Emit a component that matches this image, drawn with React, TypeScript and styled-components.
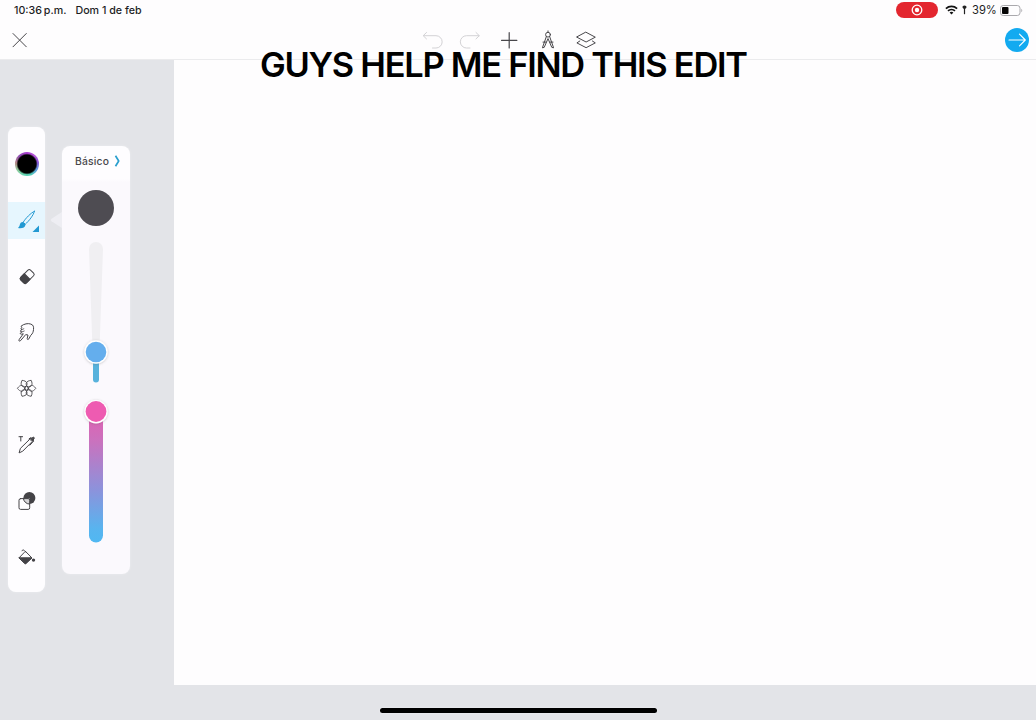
import React from 'react';
import styled, { createGlobalStyle } from 'styled-components';

const GlobalStyle = createGlobalStyle`
  * { box-sizing: border-box; }
  body { margin: 0; background: #e3e4e8; overflow: hidden; }
`;

const Screen = styled.div`
  position: relative;
  display: flex;
  flex-direction: column;
  width: 1036px;
  height: 720px;
  background: #e3e4e8;
  font-family: Inter, 'Liberation Sans', sans-serif;
  color: #1d1d1f;
`;

const Header = styled.header`
  flex: none;
  height: 60px;
  background: #fefdfe;
  border-bottom: 1px solid #ebebed;
`;

const StatusBar = styled.div`
  display: flex;
  align-items: center;
  justify-content: space-between;
  height: 20px;
  padding: 0 13px 0 14px;
  font-size: 10.7px;
  font-weight: 500;
  white-space: pre;
`;

const Clock = styled.div`
  display: flex;
  gap: 9px;
`;

const Time = styled.span`
  word-spacing: -1px;
`;

const StatusIcons = styled.div`
  display: flex;
  align-items: center;
  height: 20px;
`;

const RecordPill = styled.div`
  display: flex;
  align-items: center;
  justify-content: center;
  width: 42px;
  height: 16px;
  margin-right: 7px;
  border-radius: 8px;
  background: #e3262f;
`;

const LocationIcon = styled.svg`
  width: 8px;
  height: 10px;
  margin-left: 2px;
`;

const BatteryText = styled.span`
  width: 24px;
  margin: 0 4px;
  font-size: 11.2px;
  font-weight: 400;
`;

const NavBar = styled.nav`
  display: grid;
  grid-template-columns: 1fr auto 1fr;
  align-items: center;
  height: 40px;
  padding: 0 7px 0 10px;
`;

const NavActions = styled.div`
  display: flex;
  gap: 14.6px;
  margin-right: 21px;
`;

const IconButton = styled.button<{ $faded?: boolean }>`
  display: flex;
  width: 24px;
  height: 24px;
  padding: 0;
  border: 0;
  background: none;
  color: ${(p) => (p.$faded ? '#d3d2d5' : '#48474b')};
`;

const CloseButton = styled(IconButton)`
  width: 20px;
  height: 20px;
`;

const NextButton = styled(IconButton)`
  justify-self: end;
  border-radius: 50%;
  background: #13aaf0;
  color: #fff;
`;

const Workspace = styled.main`
  display: flex;
  height: 625px;
`;

const Side = styled.aside`
  display: flex;
  align-items: flex-start;
  width: 174px;
  padding-left: 8px;
`;

const Canvas = styled.section`
  flex: 1;
  background: #fefdfe;
`;

const ToolRail = styled.div`
  display: flex;
  flex-direction: column;
  width: 37px;
  height: 465px;
  margin-top: 67px;
  padding-top: 9px;
  border-radius: 8px;
  background: #fefdff;
  box-shadow: 0 0 2px #eff0f3;
`;

const Tool = styled.button<{ $active?: boolean }>`
  display: flex;
  width: 37px;
  height: 56px;
  padding: 0;
  border: 0;
  color: ${(p) => (p.$active ? '#2199d2' : '#444347')};
  background: ${(p) =>
    p.$active ? 'linear-gradient(#e6f6fe, #e6f6fe) 0 10px / 100% 37px no-repeat' : 'none'};
`;

const ColorRing = styled.span`
  width: 24px;
  height: 24px;
  margin: 15.5px 0 0 6.5px;
  border-radius: 50%;
  background:
    radial-gradient(circle, #000 0 9px, rgba(0, 0, 0, 0) 10.6px),
    conic-gradient(#a83ccf, #b655d8 40deg, #8a55d8 80deg, #5f9ae0 120deg, #50cdb5 160deg, #66d5b0 200deg, #90c99a 240deg, #b58a88 275deg, #8e4cb0 315deg, #a83ccf);
`;

const Pointer = styled.svg`
  width: 13px;
  height: 20px;
  margin: 150px 0 0 4px;
`;

const BrushPanel = styled.div`
  display: flex;
  flex-direction: column;
  align-items: center;
  width: 68px;
  height: 428px;
  margin-top: 86px;
  border-radius: 8px;
  background: linear-gradient(#fefdff 0 33px, #fbf9fd 36px);
  box-shadow: 0 0 2px #eff0f3;
`;

const BrushName = styled.div`
  display: flex;
  align-items: center;
  align-self: stretch;
  gap: 5px;
  height: 29px;
  padding-left: 13px;
  font-size: 10.3px;
  font-weight: 500;
  letter-spacing: 0.2px;
  color: #48474b;
`;

const BrushPreview = styled.div`
  width: 36px;
  height: 36px;
  margin-top: 15px;
  border-radius: 50%;
  background: #4e4c52;
`;

const Sliders = styled.svg`
  width: 68px;
  height: 320px;
  margin-top: 10px;
`;

const Caption = styled.h1`
  position: absolute;
  top: 44px;
  left: 260px;
  margin: 0;
  font-size: 34.4px;
  line-height: 42px;
  font-weight: 600;
  letter-spacing: -1.26px;
  white-space: nowrap;
  color: #000;
`;

const Footer = styled.footer`
  display: flex;
  flex: 1;
  justify-content: center;
  padding-top: 23px;
`;

const HomeIndicator = styled.div`
  width: 277px;
  height: 5px;
  border-radius: 3px;
  background: #000;
  box-shadow: 0 0 2px #f4f4f6;
`;

const Glyph = ({ w = 24, h = 24, sw = 1, children }: { w?: number; h?: number; sw?: number; children: React.ReactNode }) => (
  <svg width={w} height={h} viewBox={`0 0 ${w} ${h}`} fill="none" stroke="currentColor" strokeWidth={sw} strokeLinecap="round" strokeLinejoin="round">
    {children}
  </svg>
);

const ToolGlyph = ({ children }: { children: React.ReactNode }) => (
  <Glyph w={37} h={56}>{children}</Glyph>
);

const petals = [0, 60, 120, 180, 240, 300];

export default function App() {
  return (
    <Screen>
      <GlobalStyle />
      <Header>
        <StatusBar>
          <Clock><Time>10:36 p.m.</Time><span>Dom 1 de feb</span></Clock>
          <StatusIcons>
            <RecordPill>
              <svg width="12" height="12" viewBox="0 0 12 12">
                <circle cx="6" cy="6" r="4.8" fill="none" stroke="#fff" strokeWidth="1.3" />
                <circle cx="6" cy="6" r="2.2" fill="#fff" />
              </svg>
            </RecordPill>
            <svg width="13" height="10" viewBox="0 0 13 10" fill="none" stroke="#111" strokeWidth="1.7">
              <path d="M.9 3.6C4.1.6 8.9.6 12.1 3.6M3 5.9c2-1.8 5-1.8 7 0" />
              <path d="M4.6 7.5c1.2-.9 2.6-.9 3.8 0L6.5 9.5z" fill="#111" stroke="none" />
            </svg>
            <LocationIcon viewBox="0 0 8 10">
              <path d="M4.5 1v8.2" stroke="#222" strokeWidth="1.2" />
              <path d="M4.5.4c1.3 0 2 .8 2 1.7 0 1-.8 1.8-2 1.8s-2-.8-2-1.8c0-.9.7-1.7 2-1.7z" fill="#222" />
            </LocationIcon>
            <BatteryText>39%</BatteryText>
            <svg width="23" height="11" viewBox="0 0 23 11">
              <rect x=".5" y=".5" width="19.5" height="10" rx="2.7" fill="none" stroke="#aaa9ad" />
              <rect x="2" y="2" width="6.5" height="7" rx="1" fill="#050505" />
              <path d="M21.3 3.8v3.4c1.3-.5 1.3-2.9 0-3.4z" fill="#aaa9ad" />
            </svg>
          </StatusIcons>
        </StatusBar>
        <NavBar>
          <CloseButton aria-label="Cerrar">
            <Glyph w={20} h={20}><path d="M3 3.5 16.3 16.8M16.3 3.5 3 16.8" /></Glyph>
          </CloseButton>
          <NavActions>
            <IconButton $faded aria-label="Deshacer">
              <Glyph><path d="M6.5 4.5 3.2 7.7l3.3 3.2M3.5 7.7H16a6.1 6.1 0 0 1 0 12.3h-3.5" /></Glyph>
            </IconButton>
            <IconButton $faded aria-label="Rehacer">
              <Glyph><path d="m18 4.5 3.3 3.2-3.3 3.2M21 7.7H8.5a6.1 6.1 0 0 0 0 12.3H12" /></Glyph>
            </IconButton>
            <IconButton aria-label="Agregar">
              <Glyph sw={1.2}><path d="M12.2 4.7v15.2M4.5 12.3h15.4" /></Glyph>
            </IconButton>
            <IconButton aria-label="Reglas">
              <Glyph>
                <path d="M12 2.9v1.3M10.4 8.5 6.4 19.8l1.8-.4L12 10.6l3.8 8.8 1.8.4-4-11.3M7 14.1h3M14 14.1h3" />
                <circle cx="12" cy="6.7" r="2.4" />
              </Glyph>
            </IconButton>
            <IconButton aria-label="Capas">
              <Glyph>
                <path d="m12.1 4.3 9.2 4.9-9.2 4.8-9.2-4.8zM5.8 13l-2.9 1.9 9.2 4.8 9.2-4.8-2.9-1.9" />
              </Glyph>
            </IconButton>
          </NavActions>
          <NextButton aria-label="Siguiente">
            <Glyph sw={1.1}><path d="M4 12h16.2M14.5 6.2l5.8 5.8-5.8 5.8" /></Glyph>
          </NextButton>
        </NavBar>
      </Header>

      <Workspace>
        <Side>
          <ToolRail>
            <Tool aria-label="Color"><ColorRing /></Tool>
            <Tool $active aria-label="Pincel">
              <ToolGlyph>
                <path d="M26.4 19.3c-3.5 1.5-9 7.2-11.2 11l2.1 1.9c3.5-3 8.4-9.2 9.1-12.9z" />
                <path d="M14.8 30c-3.9.2-2 3.8-4.8 6 3.5.8 7.3-.3 7.5-3.6z" fill="currentColor" stroke="none" />
                <path d="M31 33.5V40h-6.5z" fill="currentColor" stroke="none" />
              </ToolGlyph>
            </Tool>
            <Tool aria-label="Borrador">
              <ToolGlyph>
                <g transform="rotate(-45 19.1 28.6)">
                  <rect x="12.3" y="24.6" width="13.8" height="8" rx="1.8" />
                  <path d="M19.2 24.6v8h-5.1a1.8 1.8 0 0 1-1.8-1.8v-4.4a1.8 1.8 0 0 1 1.8-1.8z" fill="currentColor" />
                </g>
              </ToolGlyph>
            </Tool>
            <Tool aria-label="Difuminar">
              <ToolGlyph>
                <path d="M13.3 22c2.5-2.2 6.9-3 9.5-1.9 2.7.7 3 3 2.7 5.4-.2 2.3-.7 4-2.7 5.8l-2.2 3.9c-.6.8-1.6.3-1.4-.6l.8-3.6-2.3-.4-5 5.9c-1.4 1.3-2.5.2-1.4-1.2l4-5.5-1.9.4c-1.3.1-1.5-1.2-.4-1.7l.9-.6c-1.6.1-2.1-1.1-.8-1.8l.9-.6c-1.4 0-1.5-1.3-.4-1.8z" />
                <path d="m13.8 25.6 2-.8M14 27.9l2.2-.9" strokeWidth=".8" />
              </ToolGlyph>
            </Tool>
            <Tool aria-label="Efectos">
              <ToolGlyph>
                {petals.map((a) => (
                  <path key={a} transform={`rotate(${a} 18.6 28.3)`} strokeWidth=".8" d="M20.5 28.3c1-4 4.4-4 7.3 0-2.9 4-6.3 4-7.3 0z" />
                ))}
                <circle cx="18.6" cy="28.3" r="1.8" strokeWidth=".8" />
              </ToolGlyph>
            </Tool>
            <Tool aria-label="Texto">
              <ToolGlyph>
                <path d="M11 20.7h3.6M12.8 20.7v4.3" />
                <path d="m11.2 36.5 1.2-4.1 9.4-9.2 2.4 2.4-9.2 9.3z" />
                <path d="m21 22.9 1.3-1 1.4.6 1.1-1c.9-.8 1.9.2 1.2 1.1l-1.1 1.2.6 1.4-3.6 4" />
                <path d="m22.2 22.5 2.8 2.8.9-3.2z" fill="currentColor" />
              </ToolGlyph>
            </Tool>
            <Tool aria-label="Formas">
              <ToolGlyph>
                <circle cx="21.4" cy="26.1" r="6" fill="currentColor" stroke="none" />
                <path d="M15.4 26.6h6.3v5.5a6 6 0 0 1-6.3-5.5z" fill="#d6d5d8" stroke="none" />
                <rect x="11" y="26.6" width="10.7" height="10.8" rx="1.6" />
                <path d="M15.4 26.3a6 6 0 0 0 6.2 5.8" />
              </ToolGlyph>
            </Tool>
            <Tool aria-label="Relleno">
              <ToolGlyph>
                <path d="m17.3 23.2 6.6 6.7-6.4 5.7-6.5-5.7 5.3-5.5M14 22.8c.2-1 1.5-1.2 2.3-.3l1.6 1.8" />
                <path d="M11.2 29.8H24l-6.2 5.9h-.6z" fill="currentColor" />
                <circle cx="25.5" cy="32.1" r="1.7" fill="currentColor" stroke="none" />
              </ToolGlyph>
            </Tool>
          </ToolRail>
          <Pointer viewBox="0 0 13 20"><path d="M13 2v16L2.5 11.2a1.5 1.5 0 0 1 0-2.4z" fill="#eeeef3" /></Pointer>
          <BrushPanel>
            <BrushName>
              Básico
              <svg width="7" height="12" viewBox="0 0 7 12" fill="none" stroke="#2a9fce" strokeWidth="1.7"><path d="M1.5.7 4.7 6 1.5 11.3" strokeLinejoin="round" /></svg>
            </BrushName>
            <BrushPreview />
            <Sliders viewBox="0 0 68 320">
              <defs>
                <linearGradient id="opacity" x1="0" y1="0" x2="0" y2="1">
                  <stop offset="0" stopColor="#e65caf" />
                  <stop offset=".25" stopColor="#cb71bd" />
                  <stop offset=".62" stopColor="#8b93dc" />
                  <stop offset=".9" stopColor="#58b4ef" />
                  <stop offset="1" stopColor="#50b8f2" />
                </linearGradient>
                <filter id="shadow" x="-50%" y="-50%" width="200%" height="200%">
                  <feDropShadow dx="0" dy=".5" stdDeviation="1.2" floodColor="#555" floodOpacity=".35" />
                </filter>
              </defs>
              <path d="M27 13a7 7 0 0 1 14 0l-3.5 100h-7z" fill="#f0eff2" />
              <rect x="31" y="112" width="6" height="34.5" rx="3" fill="#57b2dc" />
              <circle cx="34" cy="116" r="11.7" fill="#fff" filter="url(#shadow)" />
              <circle cx="34" cy="116" r="10.3" fill="#64aeed" />
              <rect x="27" y="170" width="14" height="136.5" rx="7" fill="url(#opacity)" />
              <circle cx="34" cy="175.8" r="11.7" fill="#fff" filter="url(#shadow)" />
              <circle cx="34" cy="175.5" r="10.4" fill="#ee5bb1" />
            </Sliders>
          </BrushPanel>
        </Side>
        <Canvas />
      </Workspace>
      <Footer><HomeIndicator /></Footer>
      <Caption>GUYS HELP ME FIND THIS EDIT</Caption>
    </Screen>
  );
}
